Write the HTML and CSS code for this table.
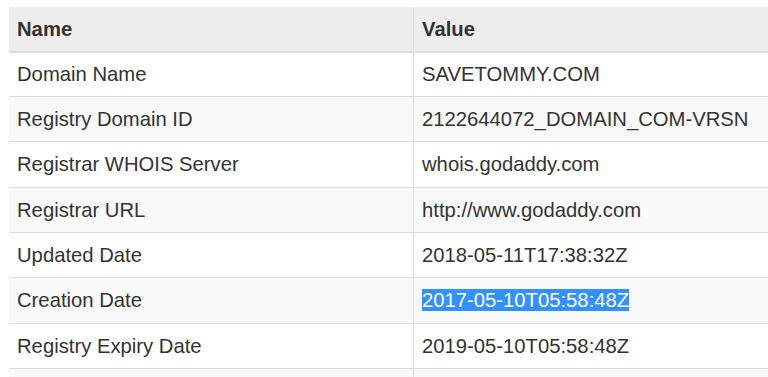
FILE: index.html
```html
<!DOCTYPE html>
<html>
<head>
<meta charset="utf-8">
<link rel="stylesheet" href="styles.css">
</head>
<body>
<table class="whois">
  <tr class="head"><th>Name</th><th>Value</th></tr>
  <tr class="first"><td>Domain Name</td><td>SAVETOMMY.COM</td></tr>
  <tr><td>Registry Domain ID</td><td>2122644072_DOMAIN_COM-VRSN</td></tr>
  <tr><td>Registrar WHOIS Server</td><td>whois.godaddy.com</td></tr>
  <tr><td>Registrar URL</td><td>http://www.godaddy.com</td></tr>
  <tr><td>Updated Date</td><td>2018-05-11T17:38:32Z</td></tr>
  <tr><td>Creation Date</td><td><span class="sel">2017-05-10T05:58:48Z</span></td></tr>
  <tr><td>Registry Expiry Date</td><td>2019-05-10T05:58:48Z</td></tr>
  <tr><td>&nbsp;</td><td>&nbsp;</td></tr>
</table>
</body>
</html>
```
FILE: styles.css
```css
html, body {
  margin: 0;
  padding: 0;
  overflow: hidden;
  background: #fff;
}
body {
  padding: 7px 0 0 9px;
  font-family: "Liberation Sans", Arial, sans-serif;
  font-size: 20.25px;
  color: #333;
}
.whois {
  border-collapse: collapse;
  width: 810px;
  table-layout: fixed;
}
.whois th,
.whois td {
  text-align: left;
  padding: 8px 8px;
  line-height: 28.33px;
  border-top: 1px solid #ddd;
  white-space: nowrap;
}
.whois th:first-child,
.whois td:first-child {
  width: 388px;
  border-right: 1px solid #ddd;
}
.whois .head th {
  border-top: none;
  background: #eee;
  font-weight: bold;
  border-bottom: 2px solid #ddd;
  padding-bottom: 7.5px;
}
.whois .first td {
  padding-top: 7px;
}
.whois tr:nth-child(odd) td {
  background: #f9f9f9;
}
.whois tr:nth-child(even) td {
  background: #fff;
}
.sel {
  background: #3390ff;
  color: #fff;
}
```
